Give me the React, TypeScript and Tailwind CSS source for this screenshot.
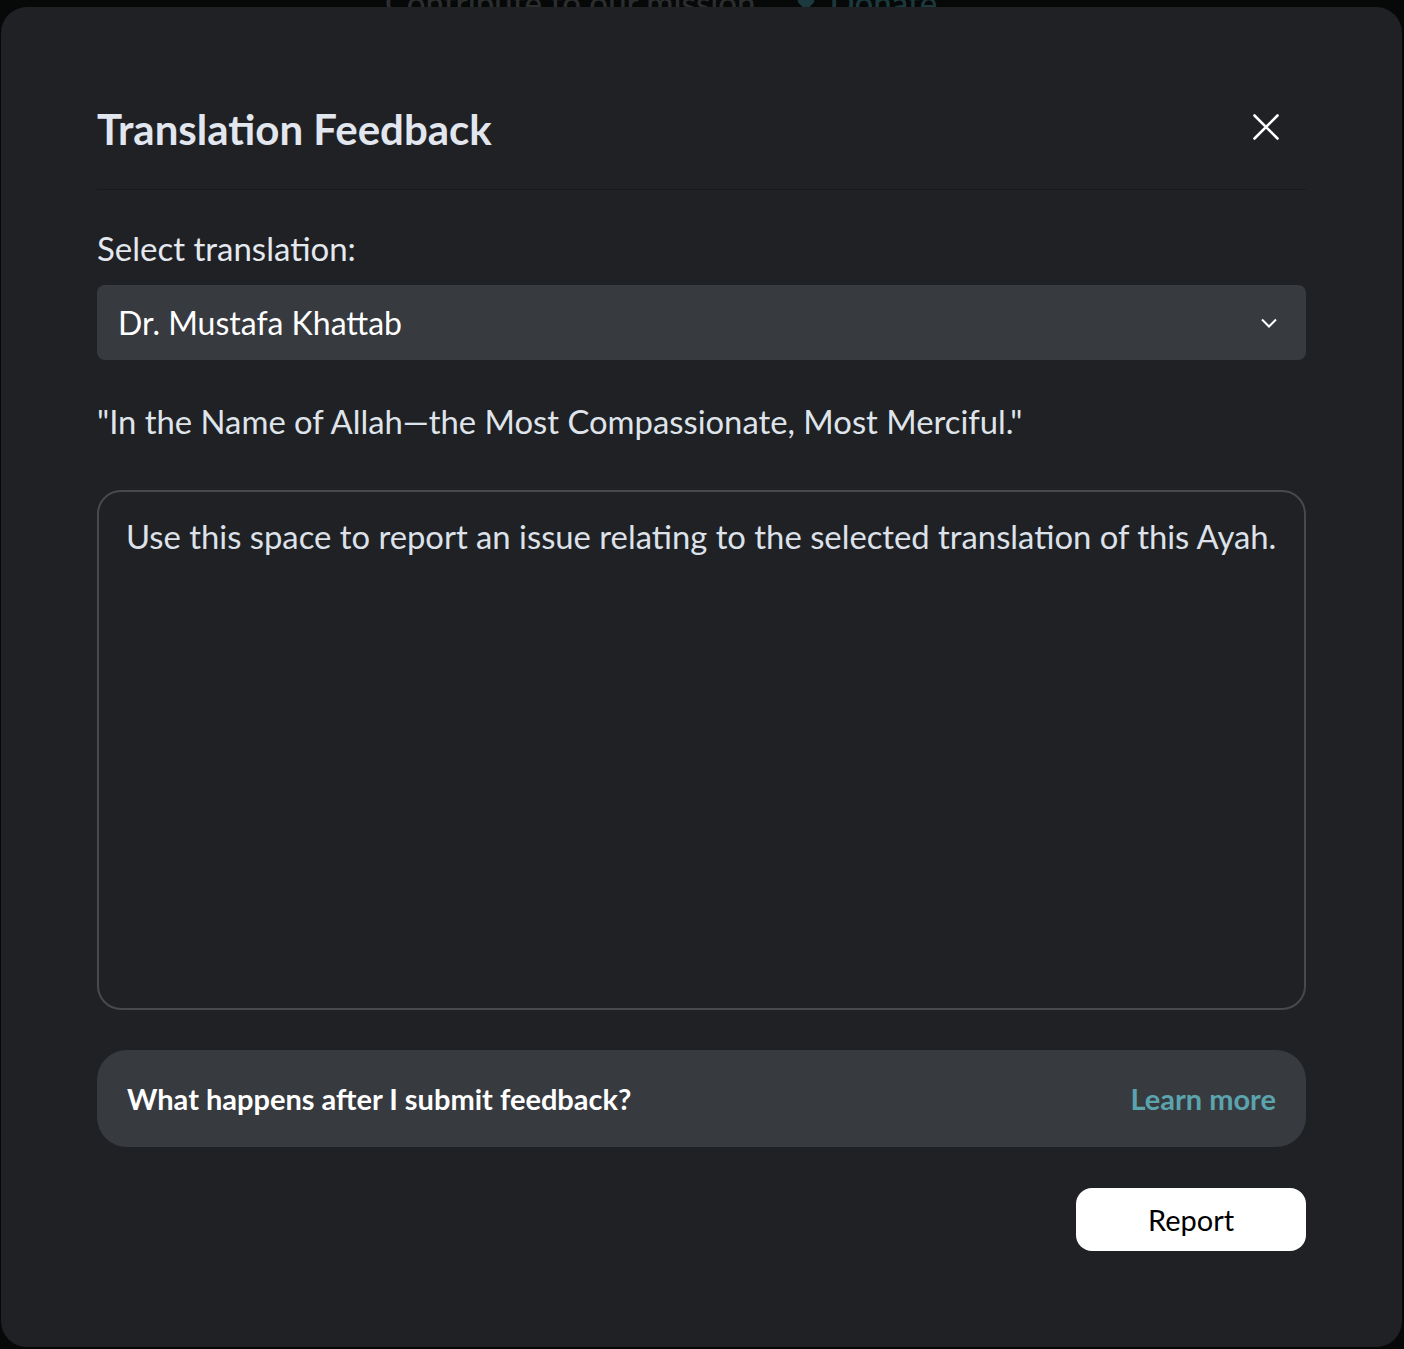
import React from "react";

export default function App() {
  const font = { fontFamily: "Lato, 'Noto Sans', sans-serif" };
  return (
    <div className="relative w-full h-[1349px] bg-[#070909] overflow-hidden" style={font}>
      <div className="absolute top-[-22px] left-[385px] flex items-center gap-[40px] text-[33px] font-medium">
        <span className="text-[#2c2e2f]">Contribute to our mission</span>
        <span className="text-[#1c3a3d] flex items-center gap-[14px]">
          <svg width="20" height="20" viewBox="0 0 24 24" fill="#1c3a3d"><path d="M12 21 3 12a5 5 0 0 1 9-6 5 5 0 0 1 9 6z" /></svg>
          Donate
        </span>
      </div>
      <div className="relative pt-[7px] pl-[1px] pr-[2px]">
        <div className="h-[1340px] rounded-[26px] bg-[#202124] px-[96px] pt-[92px] flex flex-col">
          <div className="flex items-center justify-between pb-[30px] border-b border-[#18191b]">
            <h1 className="text-[42px] font-bold text-[#e2e6ee] leading-[60px]">Translation Feedback</h1>
            <button className="mr-[27px] -mt-[5px] text-white">
              <svg width="26" height="26" viewBox="0 0 26 26" fill="none" stroke="currentColor" strokeWidth="2.6" strokeLinecap="round">
                <path d="M1.5 1.5 24.5 24.5M24.5 1.5 1.5 24.5" />
              </svg>
            </button>
          </div>
          <div className="mt-[38px] text-[33px] text-[#e4e8ef] leading-[40px]">Select translation:</div>
          <div className="mt-[17px] h-[75px] rounded-[8px] bg-[#373a3f] flex items-center justify-between px-[21px]">
            <span className="text-[32px] text-white">Dr. Mustafa Khattab</span>
            <svg width="24" height="24" viewBox="0 0 24 24" fill="none" stroke="white" strokeWidth="2" className="mr-[4px]">
              <path d="M5 8.5 12 15.5 19 8.5" />
            </svg>
          </div>
          <div className="mt-[40px] text-[32.8px] text-[#dfe4eb] leading-[44px]">"In the Name of Allah—the Most Compassionate, Most Merciful."</div>
          <div className="mt-[46px] h-[520px] rounded-[24px] border-2 border-[#48494c] px-[27px] pt-[25px]">
            <div className="text-[32.8px] text-[#dde2ea] leading-[40px]">Use this space to report an issue relating to the selected translation of this Ayah.</div>
          </div>
          <div className="mt-[40px] h-[97px] rounded-[30px] bg-[#373a3f] flex items-center justify-between px-[30px]">
            <span className="text-[29px] font-bold text-white">What happens after I submit feedback?</span>
            <span className="text-[29px] font-bold text-[#5ba4ad]">Learn more</span>
          </div>
          <div className="mt-[41px] flex justify-end">
            <button className="w-[230px] h-[63px] rounded-[16px] bg-white text-black text-[29px]">Report</button>
          </div>
        </div>
      </div>
    </div>
  );
}
